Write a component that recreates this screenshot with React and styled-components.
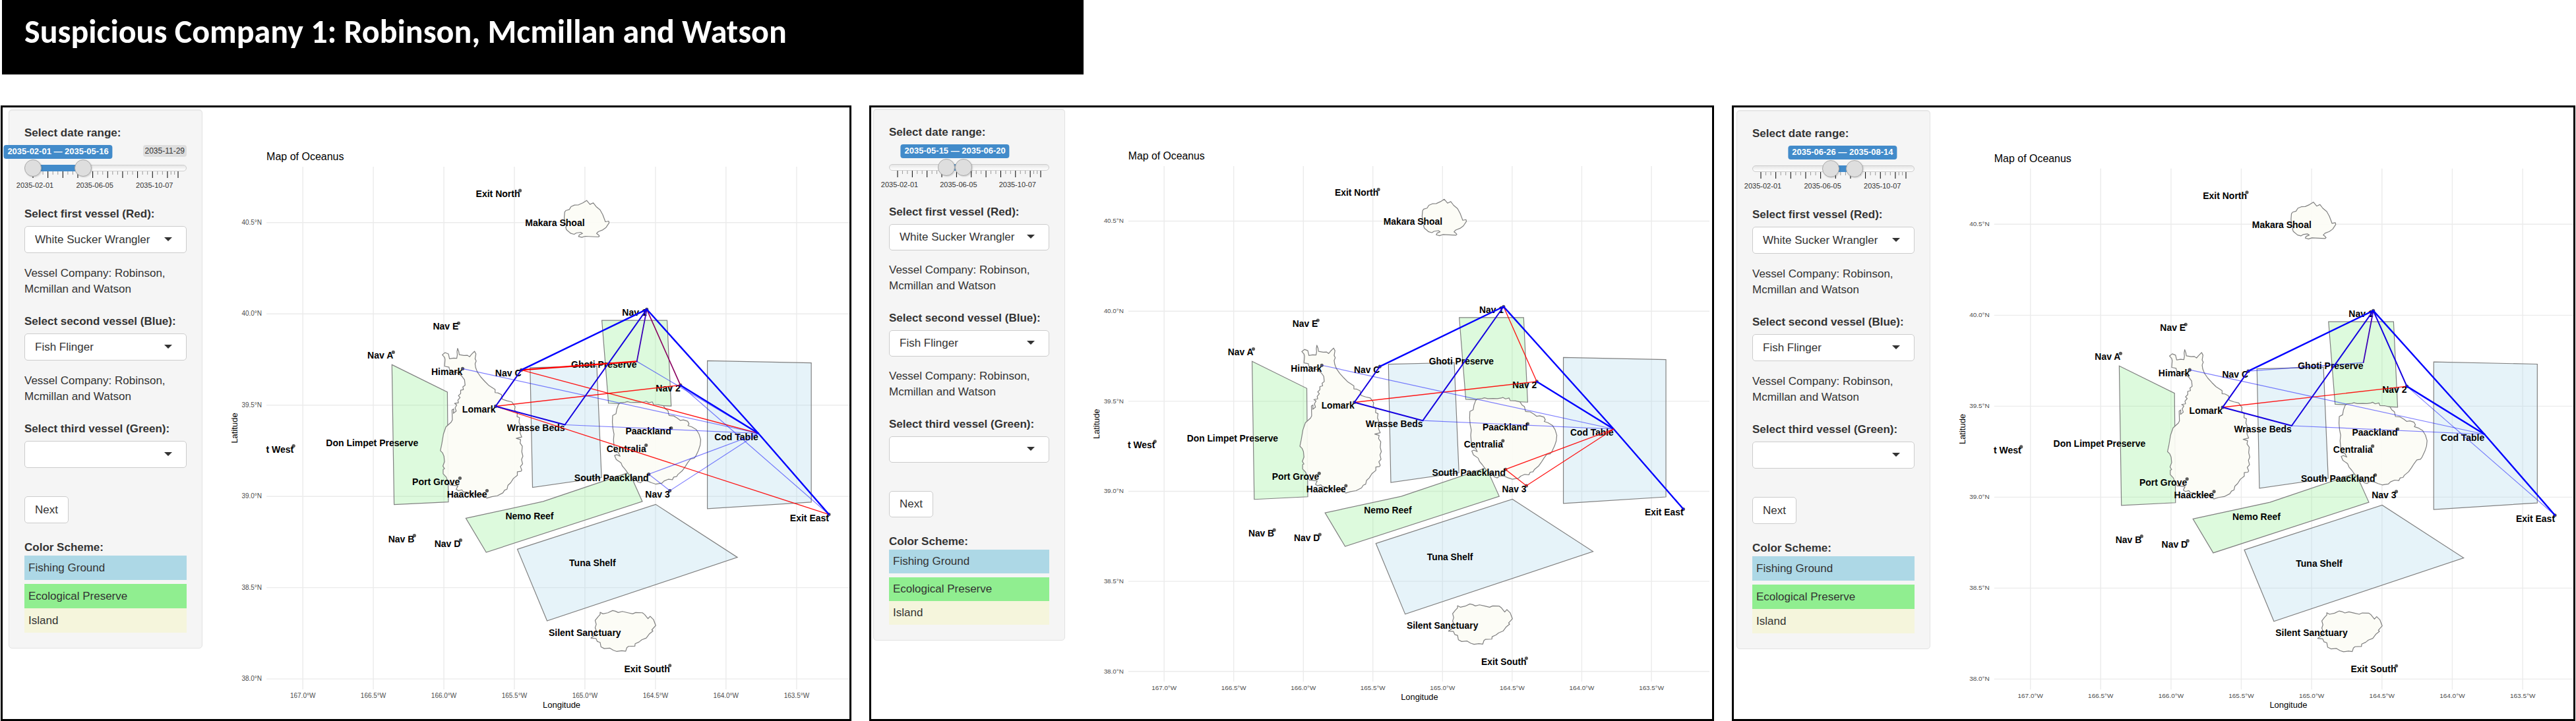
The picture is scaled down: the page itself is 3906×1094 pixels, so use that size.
import React, { useState } from "react";
import styled, { createGlobalStyle, css } from "styled-components";

const GlobalStyle = createGlobalStyle`
  *, *::before, *::after { box-sizing: border-box; }
  body {
    margin: 0;
    background: #fff;
    color: #333;
    font-family: "Liberation Sans", Arial, sans-serif;
    font-size: 17px;
    line-height: 24px;
  }
`;

/* ---------- page ---------- */

const Page = styled.main`
  padding: 0 1px;
`;

const Banner = styled.header`
  display: flex;
  align-items: center;
  width: 42%;
  height: 113px;
  margin: 0 0 47px 2px;
  padding: 0 34px 18px;
  background: #000;
`;

const Title = styled.h1`
  margin: 0;
  color: #fff;
  font-family: Carlito, Lato, sans-serif;
  font-size: 50px;
  font-weight: 700;
  line-height: 60px;
  white-space: nowrap;
`;

const Panels = styled.div`
  display: grid;
  grid-template-columns: 1290fr 1281fr 1279fr;
  gap: 27px;
`;

const Panel = styled.section`
  display: flex;
  align-items: flex-start;
  min-width: 0;
  border: 3px solid #000;
`;

/* ---------- sidebar ---------- */

const Sidebar = styled.form`
  flex: none;
  width: ${(p) => (p.$dense ? 291 : 294)}px;
  margin: ${(p) => p.$margin};
  padding: 23px;
  background: #f5f5f5;
  border: 1px solid #e3e3e3;
  border-radius: 5px;
  box-shadow: inset 0 1px 1px rgba(0, 0, 0, 0.05);
  --control: ${(p) => (p.$dense ? 40 : 41)}px;
  --after-control: ${(p) => (p.$dense ? 18 : 19)}px;
  --slider: ${(p) => (p.$dense ? 97 : 99)}px;
  --swatch: ${(p) => (p.$dense ? 36 : 37)}px;
`;

const Label = styled.label`
  display: block;
  font-weight: 700;
`;

const SliderBox = styled.div`
  display: flex;
  flex-direction: column;
  height: var(--slider);
  padding-top: 6px;
`;

const BadgeRow = styled.div`
  position: relative;
  z-index: 2;
  display: flex;
  justify-content: flex-end;
  height: 21px;
`;

const RangeBadge = styled.output`
  position: absolute;
  top: 0;
  transform: translateX(-50%);
  padding: 0 6px;
  height: 21px;
  border-radius: 4px;
  background: #428bca;
  color: #fff;
  font-size: 13px;
  font-weight: 700;
  line-height: 20px;
  white-space: nowrap;
`;

const LimitBadge = styled.span`
  height: 18px;
  padding: 0 3px;
  border-radius: 4px;
  background: #dedede;
  font-size: 12px;
  line-height: 18px;
`;

const Track = styled.div`
  position: relative;
  z-index: 1;
  display: grid;
  align-items: center;
  height: 27px;

  > * {
    grid-area: 1 / 1;
  }
`;

const Rail = styled.div`
  height: 10px;
  border: 1px solid #ccc;
  border-radius: 8px;
  background: linear-gradient(#e6e6e6, #fff);
`;

const FillArea = styled.div`
  margin: 0 13px;
`;

const Fill = styled.div`
  height: 10px;
  background: #428bca;
`;

const thumb = css`
  appearance: none;
  pointer-events: auto;
  box-sizing: border-box;
  width: 26px;
  height: 26px;
  border: 1px solid #aaa;
  border-radius: 50%;
  background: #dedede;
  box-shadow: 1px 1px 2px rgba(0, 0, 0, 0.15);
  cursor: pointer;
`;

const Range = styled.input`
  appearance: none;
  pointer-events: none;
  width: 100%;
  height: 26px;
  margin: 0;
  background: transparent;

  &::-webkit-slider-runnable-track {
    height: 26px;
    background: transparent;
  }
  &::-webkit-slider-thumb {
    ${thumb}
  }
  &::-moz-range-thumb {
    ${thumb}
  }
`;

const Scale = styled.svg`
  display: block;
  width: calc(100% - 26px);
  height: 30px;
  margin: -8px 13px 0;
  overflow: visible;
  font-size: 11px;
  fill: #333;
`;

const SelectWrap = styled.div`
  position: relative;
  margin: 6px 0 var(--after-control);
`;

const Select = styled.select`
  appearance: none;
  display: block;
  width: 100%;
  height: var(--control);
  padding: 0 40px 0 15px;
  border: 1px solid #ccc;
  border-radius: 5px;
  background: #fff;
  color: #333;
  font: inherit;
`;

const Caret = styled.svg`
  position: absolute;
  top: calc(50% - 4px);
  right: 22px;
  width: 12px;
  height: 6px;
  pointer-events: none;
  fill: #333;
`;

const Company = styled.p`
  margin: 0 0 25px;
`;

const Button = styled.button`
  display: block;
  height: var(--control);
  margin: 43px 0 25px;
  padding: 0 15px;
  border: 1px solid #ccc;
  border-radius: 5px;
  background: #fff;
  color: #333;
  font: inherit;
  cursor: pointer;
`;

const Legend = styled.h2`
  margin: 0;
  font-size: 17px;
  line-height: 24px;
`;

const Swatches = styled.ul`
  margin: 0;
  padding: 0;
  list-style: none;
`;

const Swatch = styled.li`
  height: var(--swatch);
  padding: 0 6px;
  background: ${(p) => p.$color};
  line-height: var(--swatch);

  &:first-child {
    margin-bottom: 6px;
  }
`;

/* ---------- map ---------- */

const MapArea = styled.figure`
  flex: 1;
  min-width: 0;
  margin: 0;
`;

const Chart = styled.svg`
  display: block;
  width: 100%;
  height: auto;

  .grid { stroke: #ebebeb; stroke-width: 1.4; }
  .zone { stroke: #808080; stroke-width: 1.2; }
  .island { fill: #fcfcf5; fill-opacity: 0.92; stroke: #808080; stroke-width: 1.2; stroke-linejoin: round; }
  .point { fill: #404040; fill-opacity: 0.85; }
  .name { font-size: 14px; font-weight: 700; fill: #000; text-anchor: end; }
  .tick { font-size: 10px; fill: #4d4d4d; }
  .axis { font-size: 13px; fill: #000; text-anchor: middle; }
  .title { font-size: 16px; fill: #000; }
`;

const places = {
  exitNorth: ["Exit North", 788, 289],
  exitWest: ["t West", 445, 676],
  exitSouth: ["Exit South", 1015, 1009],
  exitEast: ["Exit East", 1256, 780],
  navA: ["Nav A", 596, 534],
  navB: ["Nav B", 628, 812],
  navC: ["Nav C", 790, 561],
  navD: ["Nav D", 698, 819],
  navE: ["Nav E", 695, 490],
  nav1: ["Nav 1", 980, 469],
  nav2: ["Nav 2", 1031, 584],
  nav3: ["Nav 3", 1015, 744],
  himark: ["Himark", 701, 559],
  lomark: ["Lomark", 751, 616],
  portGrove: ["Port Grove", 697, 725],
  haacklee: ["Haacklee", 738, 744],
  paackland: ["Paackland", 1017, 649],
  centralia: ["Centralia", 979, 675],
  southPaackland: ["South Paackland", 983, 719],
};

const regions = {
  ghoti: ["Ghoti Preserve", 965, 548],
  wrasse: ["Wrasse Beds", 856, 644],
  cod: ["Cod Table", 1149, 657],
  nemo: ["Nemo Reef", 839, 777],
  tuna: ["Tuna Shelf", 933, 848],
  silent: ["Silent Sanctuary", 941, 954],
  limpet: ["Don Limpet Preserve", 634, 666],
  makara: ["Makara Shoal", 886, 333],
};

const ECO = "rgba(144, 238, 144, 0.3)";
const FISH = "rgba(173, 216, 235, 0.3)";

const zones = [
  [ECO, "594,553 678,594.5 679.5,761 597.3,765"],
  [FISH, "803.3,557.4 904.3,555 911.5,724 807,739"],
  [ECO, "912,485.7 1010.8,485.7 1017,615.7 922,611.3"],
  [FISH, "1071.8,547 1229.2,550.3 1229.2,761.3 1071.8,771.3"],
  [ECO, "706,785.7 823,760.3 953.6,716.3 973.3,760.3 736.8,837.3"],
  [FISH, "784,832.7 993.5,764.7 1117.3,845 829,941.3"],
];

// Coastlines are digitised on their own grids and placed by a shape transform.
const MAIN_GRID = "translate(640 440) scale(0.4209 0.3333)";
const SHOAL_GRID = "translate(700 230) scale(0.3333)";

const islands = [
  [
    MAIN_GRID,
    "127,265 131,278 133,293 150,297 162,296 170,303 177,292 188,278 193,290 190,312 194,322 190,335 192,352 198,372 210,394 225,415 240,434 262,452 262,466 272,467 285,475 288,496 305,503 322,508 334,530 332,545 342,558 341,575 350,580 348,600 352,612 352,650 358,668 338,674 354,680 352,695 360,710 358,735 362,755 357,770 361,790 353,802 358,818 355,824 342,826 342,842 328,856 318,876 308,888 305,905 296,910 290,922 270,935 250,939 232,946 216,930 200,932 180,925 160,918 148,918 142,908 130,912 122,906 128,890 100,886 92,870 86,850 75,835 75,815 80,812 74,800 80,780 78,755 73,740 65,730 70,700 76,655 85,622 104,600 108,590 107,545 113,540 112,560 122,550 118,535 124,522 116,515 130,512 128,500 136,488 130,480 138,470 138,455 148,452 146,440 154,432 152,408 143,392 130,378 115,372 98,362 96,350 80,346 82,315 80,305 72,294 82,284 94,290 98,312 112,309 124,310 126,295 125,280",
  ],
  [
    MAIN_GRID,
    "712,512 730,510 738,507 750,511 770,510 785,511 800,508 805,505 815,512 828,508 832,520 850,521 868,526 875,540 884,548 888,570 905,572 918,582 928,592 940,590 955,596 960,608 956,616 970,622 986,634 996,655 1002,680 1000,705 994,728 984,755 978,765 965,768 955,785 945,805 935,822 920,838 915,848 905,850 900,862 885,860 870,868 862,878 850,880 840,882 825,876 810,868 795,866 785,876 775,872 768,860 755,850 742,836 730,815 720,800 715,785 698,770 692,752 700,748 712,755 705,738 692,735 690,710 688,680 690,655 686,630 684,600 685,570 697,562 700,540 706,520",
  ],
  [
    MAIN_GRID,
    "640,1465 650,1472 668,1467 685,1457 695,1460 705,1466 720,1461 740,1467 757,1472 768,1466 792,1467 800,1475 812,1494 820,1483 832,1498 840,1525 826,1545 830,1550 818,1562 806,1582 790,1590 780,1600 766,1608 765,1619 742,1620 736,1626 732,1642 718,1640 700,1643 688,1638 675,1628 655,1630 643,1622 640,1602 630,1598 625,1584 607,1582 620,1570 628,1555 622,1535 626,1520 622,1502 632,1486 640,1475",
  ],
  [
    SHOAL_GRID,
    "530,242 550,233 567,222 582,240 597,233 610,250 628,265 640,287 648,308 652,319 667,316 669,324 655,345 640,356 620,364 612,372 620,378 625,384 620,388 560,385 545,390 530,386 534,378 548,372 540,367 520,370 510,376 495,372 475,355 472,345 475,338 468,325 465,300 467,275 472,268 488,263 496,250 512,243",
  ],
];

const meridians = [
  ["167.0°W", 459],
  ["166.5°W", 565.8],
  ["166.0°W", 672.7],
  ["165.5°W", 779.4],
  ["165.0°W", 886.3],
  ["164.5°W", 993.2],
  ["164.0°W", 1100],
  ["163.5°W", 1207],
];

const parallels = [
  ["40.5°N", 337.6],
  ["40.0°N", 476],
  ["39.5°N", 614.3],
  ["39.0°N", 752.6],
  ["38.5°N", 890.9],
  ["38.0°N", 1029.2],
];

const strokes = {
  faint: { stroke: "#0000ff", strokeOpacity: 0.5, strokeWidth: 1.2 },
  red: { stroke: "#ff0000", strokeOpacity: 0.9, strokeWidth: 1.4 },
  redBold: { stroke: "#ff0000", strokeWidth: 2.2 },
  purple: { stroke: "#8a0060", strokeWidth: 1.6 },
  indigo: { stroke: "#3c00b8", strokeWidth: 1.8 },
  blue: { stroke: "#1400e0", strokeWidth: 2 },
  blueBold: { stroke: "#0000ff", strokeWidth: 2.4 },
};

const at = (key) => (places[key] || regions[key]).slice(1);

function OceanMap({ id, viewBox, routes }) {
  const [minX, , width] = viewBox.split(" ").map(Number);
  const right = Math.min(minX + width, 1296);
  const named = [...Object.values(regions), ...Object.values(places)];

  return (
    <MapArea>
      <Chart viewBox={viewBox} role="img" aria-labelledby={`${id}-title`}>
        <text id={`${id}-title`} className="title" x="404" y="243">
          Map of Oceanus
        </text>

        {meridians.map(([label, x]) => (
          <React.Fragment key={label}>
            <line className="grid" x1={x} x2={x} y1="253" y2="1045" />
            <text className="tick" x={x} y="1058" textAnchor="middle">
              {label}
            </text>
          </React.Fragment>
        ))}
        {parallels.map(([label, y]) => (
          <React.Fragment key={label}>
            <line className="grid" x1="404" x2={right} y1={y} y2={y} />
            <text className="tick" x="397" y={y + 3} textAnchor="end">
              {label}
            </text>
          </React.Fragment>
        ))}
        <text className="axis" x="851" y="1073">
          Longitude
        </text>
        <text className="axis" transform="translate(360 649) rotate(-90)">
          Latitude
        </text>

        {zones.map(([fill, points]) => (
          <polygon key={points} className="zone" fill={fill} points={points} />
        ))}
        {islands.map(([grid, points]) => (
          <polygon
            key={points}
            className="island"
            points={points}
            transform={grid}
            vectorEffect="non-scaling-stroke"
          />
        ))}

        {Object.values(places).map(([name, x, y]) => (
          <circle key={name} className="point" cx={x} cy={y} r="2.6" />
        ))}
        {named.map(([name, x, y]) => (
          <text key={name} className="name" x={x} y={y + 10}>
            {name}
          </text>
        ))}

        {routes.map(([kind, from, to]) => {
          const [x1, y1] = at(from);
          const [x2, y2] = at(to);
          return (
            <line
              key={kind + from + to}
              x1={x1}
              y1={y1}
              x2={x2}
              y2={y2}
              strokeLinecap="round"
              {...strokes[kind]}
            />
          );
        })}
      </Chart>
    </MapArea>
  );
}

/* ---------- date slider ---------- */

const DAYS = 301;
const START = Date.UTC(2035, 1, 1);
const formatDay = (day) =>
  new Date(START + day * 86400000).toISOString().slice(0, 10);
const percent = (day) => `${(day / DAYS) * 100}%`;

const majorDays = [0, 31, 62, 93, 124, 155, 186, 217, 248, 279, DAYS];
const minorDays = majorDays
  .slice(1)
  .flatMap((day, i) => {
    const step = (day - majorDays[i]) / 3;
    return [majorDays[i] + step, majorDays[i] + 2 * step];
  });

function DateSlider({ id, initial, showLimit }) {
  const [from, setFrom] = useState(initial[0]);
  const [to, setTo] = useState(initial[1]);
  const middle = (from + to) / 2 / DAYS;

  return (
    <>
      <Label htmlFor={`${id}-from`}>Select date range:</Label>
      <SliderBox>
        <BadgeRow>
          <RangeBadge
            htmlFor={`${id}-from ${id}-to`}
            style={{ left: `calc(13px + (100% - 26px) * ${middle})` }}
          >
            {formatDay(from)} — {formatDay(to)}
          </RangeBadge>
          {showLimit && <LimitBadge>2035-11-29</LimitBadge>}
        </BadgeRow>
        <Track>
          <Rail />
          <FillArea>
            <Fill
              style={{ marginLeft: percent(from), width: percent(to - from) }}
            />
          </FillArea>
          <Range
            id={`${id}-from`}
            type="range"
            min="0"
            max={DAYS}
            value={from}
            onChange={(e) => setFrom(Math.min(+e.target.value, to))}
          />
          <Range
            id={`${id}-to`}
            type="range"
            aria-label="End of date range"
            min="0"
            max={DAYS}
            value={to}
            onChange={(e) => setTo(Math.max(+e.target.value, from))}
          />
        </Track>
        <Scale aria-hidden="true">
          {minorDays.map((day) => (
            <line key={day} x1={percent(day)} x2={percent(day)} y1="0" y2="5" stroke="#999" />
          ))}
          {majorDays.map((day) => (
            <line key={day} x1={percent(day)} x2={percent(day)} y1="0" y2="10" stroke="#000" />
          ))}
          {[0, 124, 248].map((day) => (
            <text key={day} x={percent(day)} dx="3" y="25" textAnchor="middle">
              {formatDay(day)}
            </text>
          ))}
        </Scale>
      </SliderBox>
    </>
  );
}

function VesselSelect({ id, label, vessel }) {
  return (
    <>
      <Label htmlFor={id}>{label}</Label>
      <SelectWrap>
        <Select id={id} defaultValue={vessel}>
          <option value={vessel}>{vessel}</option>
        </Select>
        <Caret viewBox="0 0 12 6" aria-hidden="true">
          <path d="M0 0h12L6 6z" />
        </Caret>
      </SelectWrap>
      {vessel && <Company>Vessel Company: Robinson, Mcmillan and Watson</Company>}
    </>
  );
}

/* ---------- data ---------- */

const sharedRoutes = [
  ["faint", "himark", "cod"],
  ["faint", "wrasse", "cod"],
  ["blueBold", "nav1", "navC"],
  ["blue", "navC", "lomark"],
  ["blue", "lomark", "wrasse"],
  ["blue", "wrasse", "nav1"],
  ["blueBold", "nav1", "cod"],
  ["blueBold", "cod", "exitEast"],
  ["blueBold", "nav2", "cod"],
];

const panels = [
  {
    id: "spring",
    margin: "3px 0 0 9px",
    range: [0, 104],
    showLimit: true,
    viewBox: "307 163 980 927",
    routes: [
      ["redBold", "navC", "ghoti"],
      ["red", "navC", "cod"],
      ["red", "lomark", "nav2"],
      ["red", "lomark", "exitEast"],
      ["purple", "nav1", "nav2"],
      ["indigo", "nav1", "ghoti"],
      ["faint", "ghoti", "cod"],
      ["faint", "nav2", "exitEast"],
      ["faint", "southPaackland", "cod"],
      ["faint", "nav3", "cod"],
      ["faint", "southPaackland", "nav3"],
      ...sharedRoutes,
    ],
  },
  {
    id: "june",
    dense: true,
    margin: "2px 0 0 3px",
    range: [103, 139],
    viewBox: "307 163 993 938",
    routes: [
      ["red", "nav1", "nav2"],
      ["red", "lomark", "nav2"],
      ["red", "southPaackland", "nav3"],
      ...sharedRoutes,
      ["red", "southPaackland", "cod"],
      ["red", "nav3", "cod"],
    ],
  },
  {
    id: "summer",
    margin: "4px 0 0 4px",
    range: [145, 194],
    viewBox: "307 160 977 929",
    routes: [
      ["red", "lomark", "nav2"],
      ["faint", "navC", "ghoti"],
      ["faint", "nav2", "exitEast"],
      ["indigo", "nav1", "ghoti"],
      ["blue", "nav1", "nav2"],
      ...sharedRoutes,
    ],
  },
];

export default function App() {
  return (
    <>
      <GlobalStyle />
      <Page>
        <Banner>
          <Title>Suspicious Company 1: Robinson, Mcmillan and Watson</Title>
        </Banner>
        <Panels>
          {panels.map((p) => (
            <Panel key={p.id}>
              <Sidebar
                $dense={p.dense}
                $margin={p.margin}
                onSubmit={(e) => e.preventDefault()}
              >
                <DateSlider id={`${p.id}-date`} initial={p.range} showLimit={p.showLimit} />
                <VesselSelect
                  id={`${p.id}-first`}
                  label="Select first vessel (Red):"
                  vessel="White Sucker Wrangler"
                />
                <VesselSelect
                  id={`${p.id}-second`}
                  label="Select second vessel (Blue):"
                  vessel="Fish Flinger"
                />
                <VesselSelect
                  id={`${p.id}-third`}
                  label="Select third vessel (Green):"
                  vessel=""
                />
                <Button type="submit">Next</Button>
                <Legend>Color Scheme:</Legend>
                <Swatches>
                  <Swatch $color="#add8e6">Fishing Ground</Swatch>
                  <Swatch $color="#90ee90">Ecological Preserve</Swatch>
                  <Swatch $color="#f5f5dc">Island</Swatch>
                </Swatches>
              </Sidebar>
              <OceanMap id={p.id} viewBox={p.viewBox} routes={p.routes} />
            </Panel>
          ))}
        </Panels>
      </Page>
    </>
  );
}
